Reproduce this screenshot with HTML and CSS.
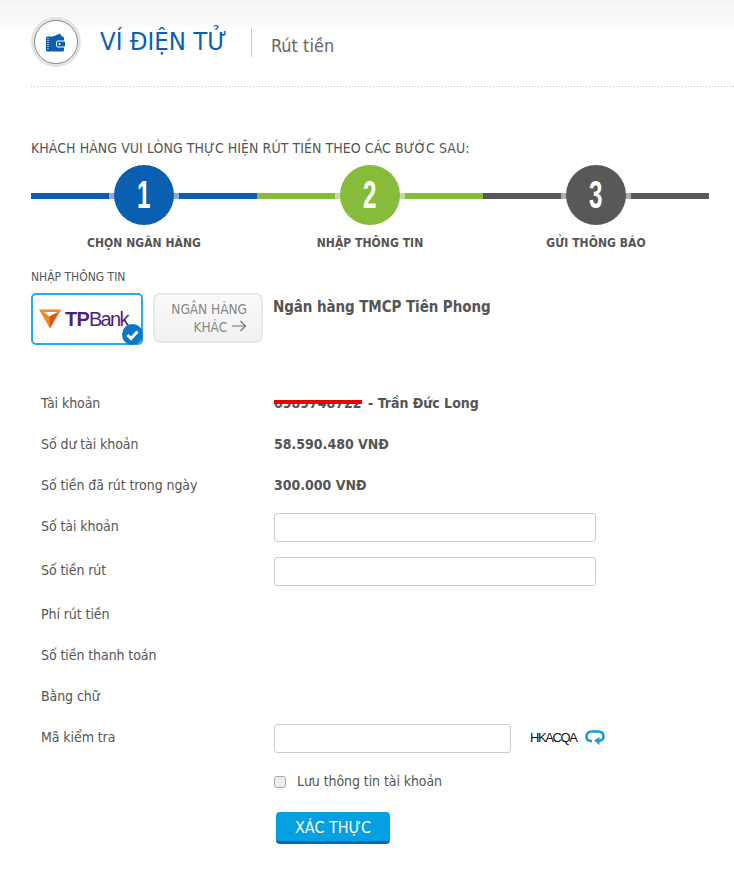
FILE: index.html
```html
<!DOCTYPE html>
<html lang="vi">
<head>
    <meta charset="UTF-8">
    <meta name="viewport" content="width=device-width, initial-scale=1.0">
    <title>Ví điện tử - Rút tiền</title>
    <link rel="stylesheet" href="styles.css">
</head>
<body>

<div class="top-head">
    <div class="logo-ring">
        <svg width="20" height="19" viewBox="0 0 20 19">
            <path d="M6 4 L14 .5 L16 4Z" fill="#0a5fb0"/>
            <rect x="0" y="3.500" width="18" height="15" rx="1.500" fill="#0a5fb0"/>
            <path d="M2 5v12" stroke="#fff" stroke-width="1" stroke-dasharray="1 1"/>
            <rect x="10.500" y="8" width="9" height="6" rx="1.500" fill="#0a5fb0" stroke="#fff" stroke-width="1"/>
            <circle cx="13.500" cy="11" r="1" fill="#fff"/>
        </svg>
    </div>
    <h1 class="head-title">VÍ ĐIỆN TỬ</h1>
    <span class="head-sub">Rút tiền</span>
</div>

<div class="content">
    <p class="intro">KHÁCH HÀNG VUI LÒNG THỰC HIỆN RÚT TIỀN THEO CÁC BƯỚC SAU:</p>

    <div class="steps">
        <div class="step step-blue">
            <div class="step-track"><span class="step-num"><b>1</b></span></div>
            <div class="step-label">CHỌN NGÂN HÀNG</div>
        </div>
        <div class="step step-green">
            <div class="step-track"><span class="step-num"><b>2</b></span></div>
            <div class="step-label">NHẬP THÔNG TIN</div>
        </div>
        <div class="step step-grey">
            <div class="step-track"><span class="step-num"><b>3</b></span></div>
            <div class="step-label">GỬI THÔNG BÁO</div>
        </div>
    </div>

    <div class="sub-label">NHẬP THÔNG TIN</div>
    <div class="bank-row">
        <div class="bank-box">
            <svg width="23" height="20" viewBox="0 0 23 20">
                <path d="M0 .5 H22.500 L11 19.500 Z" fill="#f08a24"/>
                <path d="M5 3 H19 L10.500 7.500 Z" fill="#fff"/>
                <path d="M10.500 7.500 L19 3 L11 19.500 Z" fill="#d9541e"/>
            </svg>
            <span class="tp-bold">TP</span><span class="tp-light">Bank</span>
            <span class="bank-check">
                <svg width="21" height="21" viewBox="0 0 21 21">
                    <circle cx="10.500" cy="10.500" r="10.500" fill="#0a78c8"/>
                    <path d="M5.500 11 L9 14.500 L15.500 7.500" fill="none" stroke="#fff" stroke-width="3"/>
                </svg>
            </span>
        </div>
        <div class="bank-other">
            <span>NGÂN HÀNG</span>
            <span class="bank-other-2">KHÁC
                <svg width="16" height="12" viewBox="0 0 16 12"><path d="M1 6H14.500M9.500 1l5 5-5 5" fill="none" stroke="#777" stroke-width="1.200"/></svg>
            </span>
        </div>
        <div class="bank-name">Ngân hàng TMCP Tiên Phong</div>
    </div>

    <div class="form">
        <div class="row">
            <label>Tài khoản</label>
            <div class="val"><span class="masked">0989748722<i class="red-line"></i></span> - Trần Đức Long</div>
        </div>
        <div class="row">
            <label>Số dư tài khoản</label>
            <div class="val">58.590.480 VNĐ</div>
        </div>
        <div class="row">
            <label>Số tiền đã rút trong ngày</label>
            <div class="val">300.000 VNĐ</div>
        </div>
        <div class="row row-input">
            <label>Số tài khoản</label>
            <input type="text" class="inp">
        </div>
        <div class="row row-input">
            <label>Số tiền rút</label>
            <input type="text" class="inp">
        </div>
        <div class="row"><label>Phí rút tiền</label></div>
        <div class="row"><label>Số tiền thanh toán</label></div>
        <div class="row"><label>Bằng chữ</label></div>
        <div class="row row-input">
            <label>Mã kiểm tra</label>
            <input type="text" class="inp inp-small">
            <span class="captcha">HKACQA</span>
            <svg class="reload" width="20" height="15" viewBox="0 0 20 15">
                <path d="M7 11 H6 C2.500 11 1.500 9 1.500 6.500 C1.500 3.500 3.500 1.500 7 1.500 H13 C16.500 1.500 18.500 3.500 18.500 6.500 C18.500 8.500 17 10.500 14 11" fill="none" stroke="#1a9ad8" stroke-width="2.600"/>
                <path d="M9 10.500 L14.500 7 V15 Z" fill="#1a9ad8"/>
            </svg>
        </div>
        <div class="row save-row">
            <input type="checkbox" class="chk">
            <span>Lưu thông tin tài khoản</span>
        </div>
        <div class="btn-row">
            <button class="btn-ok">XÁC THỰC</button>
        </div>
    </div>
</div>

</body>
</html>
```

FILE: styles.css
```css
* {
    box-sizing: border-box;
}
body {
    margin: 0;
    background: #fff linear-gradient(#f3f3f3, #fff) no-repeat;
    background-size: 100% 36px;
    color: #555;
    font-family: "DejaVu Sans", sans-serif;
    font-stretch: condensed;
    font-size: 13px;
}
.top-head {
    display: flex;
    align-items: center;
    height: 87px;
    margin-left: 31px;
    padding-bottom: 3px;
    background: linear-gradient(to right, #c4c4c4 1px, transparent 1px) left bottom / 3px 1px repeat-x;
}
.logo-ring {
    width: 44px;
    height: 44px;
    border-radius: 50%;
    background: #fff;
    border: 1px solid #8f8f8f;
    box-shadow: 0 0 0 3px #e2e2e2;
    display: flex;
    align-items: center;
    justify-content: center;
    margin-left: 3px;
}
.head-title {
    margin: 0 0 0 22px;
    font-size: 25.500px;
    font-weight: normal;
    color: #0a5fb0;
    padding: 0 24px 2px 0;
    border-right: 1px solid #ccc;
    line-height: 27px;
}
.head-sub {
    margin: 6px 0 0 19px;
    font-size: 18px;
    color: #666;
}
.content {
    padding: 0 25px 0 31px;
}
.intro {
    margin: 52px 0 0;
    font-size: 14px;
    line-height: 18px;
    letter-spacing: .05px;
    color: #555;
}
.steps {
    display: flex;
    margin-top: 8px;
}
.step {
    flex: 1;
    text-align: center;
}
.step-track {
    height: 60px;
    display: flex;
    align-items: center;
    justify-content: center;
    position: relative;
}
.step-track::before {
    content: "";
    position: absolute;
    left: 0;
    right: 0;
    top: 28px;
    height: 6px;
}
.step-track::after {
    content: "";
    position: absolute;
    left: 50%;
    top: 28px;
    width: 70px;
    height: 6px;
    margin-left: -35px;
    background: rgba(255, 255, 255, .5);
}
.step-num {
    width: 60px;
    height: 60px;
    border-radius: 50%;
    color: #fff;
    position: relative;
    z-index: 1;
    display: flex;
    justify-content: center;
    font-family: "Liberation Sans", sans-serif;
    font-stretch: normal;
    font-size: 39px;
    line-height: 60px;
}
.step-num b {
    display: block;
    transform: scaleX(.62);
}
.step-blue .step-track::before { background: #0a5fb0; }
.step-blue .step-num { background: #0a5fb0; }
.step-green .step-track::before { background: #86bc3a; }
.step-green .step-num { background: #86bc3a; }
.step-grey .step-track::before { background: #585858; }
.step-grey .step-num { background: #585858; }
.step-label {
    margin-top: 10px;
    font-size: 12px;
    line-height: 16px;
    font-weight: bold;
    letter-spacing: .05px;
}
.sub-label {
    margin-top: 18px;
    font-size: 12px;
    line-height: 16px;
}
.bank-row {
    display: flex;
    align-items: flex-start;
    margin-top: 8px;
}
.bank-box {
    width: 112px;
    height: 52px;
    border: 2px solid #2ba6e6;
    border-radius: 5px;
    display: flex;
    align-items: center;
    padding-left: 6px;
    position: relative;
    font-family: "Liberation Sans", sans-serif;
    font-stretch: normal;
    font-size: 20px;
    color: #4b1f7d;
}
.tp-bold {
    margin-left: 3px;
    font-weight: bold;
    letter-spacing: -.8px;
}
.tp-light {
    letter-spacing: -1.700px;
}
.bank-check {
    position: absolute;
    right: -2px;
    bottom: -2px;
    height: 21px;
}
.bank-other {
    width: 110px;
    height: 50px;
    margin-left: 10px;
    background: linear-gradient(#fafafa, #f1f1f1);
    border: 2px solid #e8e8e8;
    border-radius: 7px;
    display: flex;
    flex-direction: column;
    align-items: flex-end;
    justify-content: center;
    padding-right: 14px;
    font-size: 13.500px;
    line-height: 18px;
    color: #888;
}
.bank-name {
    margin-left: 10px;
    font-size: 15px;
    font-weight: bold;
    line-height: 28px;
    letter-spacing: -.08px;
}
.form {
    margin-top: 38px;
    padding-left: 10px;
}
.row {
    display: flex;
    height: 41px;
    align-items: flex-start;
    line-height: 41px;
}
.row label {
    width: 233px;
    flex: none;
    font-size: 14px;
    letter-spacing: -.08px;
}
.val {
    font-size: 14px;
    font-weight: bold;
}
.masked {
    position: relative;
    margin-right: 2px;
}
.red-line {
    position: absolute;
    left: 0;
    right: 0;
    top: 0;
    height: 9px;
    background: #fff;
    border-bottom: 4px solid #e60000;
}
.row-input {
    height: 44px;
}
.inp {
    width: 322px;
    height: 29px;
    margin: 7px 0 0;
    border: 1px solid #ccc;
    border-radius: 3px;
    background: #fff;
}
.inp-small {
    width: 237px;
}
.captcha {
    margin-left: 19px;
    font-family: "Liberation Sans", sans-serif;
    font-stretch: normal;
    font-size: 13px;
    color: #111;
    letter-spacing: -1.400px;
}
.reload {
    margin: 13px 0 0 8px;
}
.save-row {
    align-items: center;
    margin-left: 233px;
    font-size: 14px;
    letter-spacing: -.08px;
}
.chk {
    appearance: none;
    width: 12px;
    height: 12px;
    margin: 0 11px 0 0;
    background: #ececec;
    border: 1px solid #aaa;
    border-radius: 3px;
}
.btn-row {
    margin: 10px 0 0 235px;
}
.btn-ok {
    width: 114px;
    height: 32px;
    padding: 2px 0 0;
    background: #04a0e2;
    border: none;
    border-bottom: 3px solid #0a68b4;
    border-radius: 4px;
    color: #fff;
    font-family: inherit;
    font-stretch: condensed;
    font-size: 16px;
}
```
